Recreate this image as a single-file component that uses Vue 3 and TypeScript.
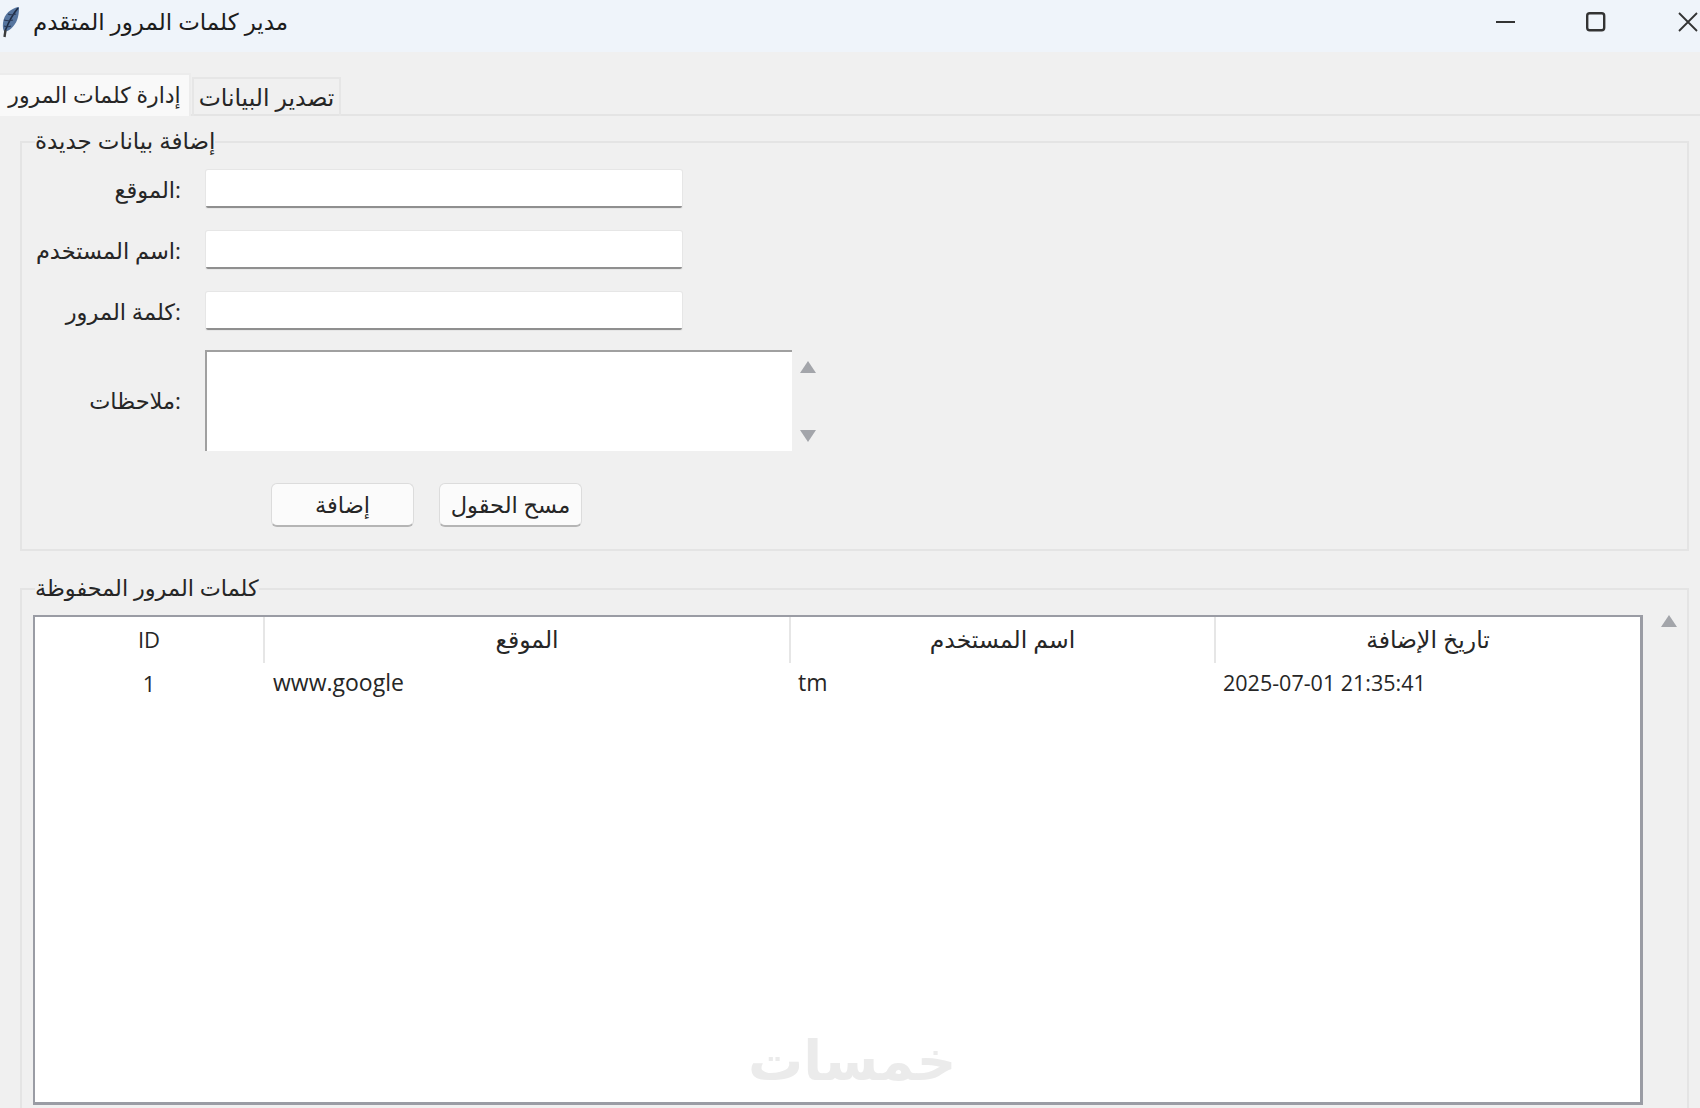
<script setup lang="ts">
interface Row { id: number; site: string; user: string; date: string }
const fields: string[] = ['الموقع:', 'اسم المستخدم:', 'كلمة المرور:']
const columns: string[] = ['ID', 'الموقع', 'اسم المستخدم', 'تاريخ الإضافة']
const rows: Row[] = [{ id: 1, site: 'www.google', user: 'tm', date: '2025-07-01 21:35:41' }]
</script>

<template>
  <div class="window">
    <header class="titlebar">
      <svg class="feather" width="20" height="32" viewBox="0 0 20 32">
        <path d="M18 1C10 2 3 8 2 17c-.4 4 0 7 1.500 9 6-1 12-8 13.500-15 1-4 1-8 1-10z" fill="#56759f" />
        <path d="M17 2C12 8 8 15 4.500 24" stroke="#1f2c44" stroke-width="1.600" fill="none" />
        <path d="M4.500 24L3.500 31" stroke="#3c3c3c" stroke-width="2.400" fill="none" />
        <path d="M3 14c3 1 6 1 9 0M3 20c3 1 5 1 7 0M7 8c2 1 5 1 8 0" stroke="#2b3a56" stroke-width="1.100" fill="none" />
      </svg>
      <span class="title">مدير كلمات المرور المتقدم</span>
      <div class="controls">
        <svg width="20" height="20" viewBox="0 0 20 20"><path d="M0 10h19" stroke="#333" stroke-width="2" /></svg>
        <svg width="20" height="20" viewBox="0 0 20 20"><rect x="1.200" y="1.200" width="17" height="17" rx="2.500" fill="none" stroke="#333" stroke-width="2.400" /></svg>
        <svg width="20" height="20" viewBox="0 0 20 20"><path d="M1 1l18 18M19 1L1 19" stroke="#333" stroke-width="1.800" /></svg>
      </div>
    </header>

    <nav class="tabs">
      <div class="tab active">إدارة كلمات المرور</div>
      <div class="tab">تصدير البيانات</div>
    </nav>

    <main class="content">
      <fieldset class="group first">
        <legend>إضافة بيانات جديدة</legend>
        <div class="form">
          <template v-for="f in fields" :key="f">
            <label class="label">{{ f }}</label>
            <div class="entry"></div>
          </template>
          <label class="label notes-label">ملاحظات:</label>
          <div class="notes-row">
            <div class="notes"></div>
            <div class="notes-scroll">
              <span class="arrow up"></span>
              <span class="arrow down"></span>
            </div>
          </div>
        </div>
        <div class="buttons">
          <button class="btn" type="button">إضافة</button>
          <button class="btn" type="button">مسح الحقول</button>
        </div>
      </fieldset>

      <fieldset class="group second">
        <legend>كلمات المرور المحفوظة</legend>
        <div class="tree-wrap">
          <div class="tree">
            <div class="tree-row head">
              <div v-for="c in columns" :key="c" class="cell">{{ c }}</div>
            </div>
            <div v-for="r in rows" :key="r.id" class="tree-row body">
              <div class="cell center">{{ r.id }}</div>
              <div class="cell">{{ r.site }}</div>
              <div class="cell">{{ r.user }}</div>
              <div class="cell date">{{ r.date }}</div>
            </div>
            <div class="watermark">خمسات</div>
          </div>
          <div class="tree-scroll"><span class="arrow up"></span></div>
        </div>
      </fieldset>
    </main>
  </div>
</template>

<style>
html, body { margin: 0; background: #f0f0f0; }
</style>

<style scoped>
.window {
  width: 1700px;
  height: 1108px;
  overflow: hidden;
  background: #f0f0f0;
  color: #262626;
  font-family: "Open Sans", "DejaVu Sans", sans-serif;
  font-size: 23px;
  line-height: 1.2;
  display: flex;
  flex-direction: column;
}
.titlebar {
  height: 52px;
  flex: none;
  background: #eff4fa;
  display: flex;
  align-items: center;
  padding-left: 1px;
  color: #1c1c1c;
}
.feather { margin-bottom: 8px; flex: none; }
.title { margin-left: 12px; margin-bottom: 9px; }
.controls {
  margin-left: auto;
  display: flex;
  align-items: center;
  gap: 70px;
  margin-bottom: 8px;
  margin-right: 2px;
}
.controls svg { display: block; }
.controls svg:last-child { margin-left: 2px; }
.tabs {
  margin-top: 20px;
  height: 44px;
  flex: none;
  display: flex;
  align-items: flex-end;
  border-bottom: 2px solid #e4e4e4;
  box-sizing: border-box;
}
.tab {
  height: 39px;
  box-sizing: border-box;
  width: 149px;
  margin-left: 1px;
  margin-bottom: -2px;
  border: 2px solid #e6e6e6;
  border-bottom: none;
  display: flex;
  align-items: center;
  justify-content: center;
  white-space: nowrap;
  font-size: 23.500px;
}
.tab.active {
  width: 191px;
  height: 43px;
  margin-left: 0;
  background: #f9f9f9;
  border-color: #ececec;
  border-left: none;
  padding-bottom: 3px;
  font-size: 22px;
}
.content {
  padding: 0 11px 0 20px;
  display: flex;
  flex-direction: column;
}
.group {
  margin: 0;
  padding: 0;
  border: 2px solid #e4e4e4;
  min-width: 0;
}
.group legend {
  margin-left: 13px;
  padding: 0;
  height: 30px;
  line-height: 27px;
  white-space: nowrap;
}
.second legend { font-size: 22.400px; }
.first { margin-top: 11px; height: 424px; box-sizing: border-box; }
.second { margin-top: 23px; height: 560px; box-sizing: border-box; }
.form {
  margin-top: 13px;
  display: grid;
  grid-template-columns: 159px auto;
  column-gap: 25px;
  row-gap: 23px;
  justify-content: start;
  align-items: center;
}
.label { text-align: right; white-space: nowrap; font-size: 22.500px; }
.entry {
  width: 476px;
  height: 38px;
  box-sizing: border-box;
  background: #fff;
  border-bottom: 2px solid #8f8f8f;
  box-shadow: 0 0 0 1px #e6e6e6;
  border-radius: 2px;
}
.notes-label, .notes-row { margin-top: -3px; }
.notes-row { display: flex; margin-left: -1px; }
.notes {
  width: 587px;
  height: 101px;
  box-sizing: border-box;
  background: #fff;
  border-top: 2px solid #a0a0a0;
  border-left: 2px solid #a0a0a0;
}
.notes-scroll {
  width: 32px;
  padding: 11px 0 9px;
  display: flex;
  flex-direction: column;
  justify-content: space-between;
  align-items: center;
}
.arrow {
  display: block;
  width: 0;
  height: 0;
  border-left: 8px solid transparent;
  border-right: 8px solid transparent;
}
.arrow.up { border-bottom: 12px solid #a3a5aa; }
.arrow.down { border-top: 12px solid #a3a5aa; }
.buttons {
  margin-top: 32px;
  margin-left: 249px;
  display: flex;
  gap: 25px;
}
.btn {
  width: 143px;
  height: 44px;
  padding: 0;
  background: #fbfbfb;
  border: 1px solid #dcdcdc;
  border-bottom: 2px solid #b5b5b5;
  border-radius: 6px;
  color: inherit;
  font: inherit;
  font-size: 22.500px;
}
.tree-wrap {
  margin-top: 11px;
  margin-left: 11px;
  display: flex;
  align-items: flex-start;
}
.tree {
  position: relative;
  width: 1610px;
  height: 490px;
  box-sizing: border-box;
  flex: none;
  background: #fff;
  border: 2px solid #9a9ca4;
  border-right-width: 3px;
  border-bottom-width: 3px;
}
.tree-row {
  display: grid;
  grid-template-columns: 228px 526px 425px 1fr;
  align-items: center;
}
.head { height: 46px; text-align: center; }
.head .cell { height: 100%; display: flex; align-items: center; justify-content: center; box-sizing: border-box; padding-bottom: 1px; font-size: 23.500px; }
.head .cell:first-child { font-size: 22px; }
.head .cell + .cell { border-left: 2px solid #e6e6e6; }
.body { height: 40px; }
.body .cell { padding-left: 9px; }
.body .cell:nth-child(2) { padding-left: 10px; }
.body .cell.center { padding-left: 0; text-align: center; font-size: 22px; }
.body .cell.date { font-size: 21.500px; }
.watermark {
  position: absolute;
  left: 713px;
  top: 412px;
  width: 205px;
  text-align: center;
  font-size: 55px;
  line-height: 60px;
  font-weight: 700;
  color: #ebebeb;
  white-space: nowrap;
}
.tree-scroll {
  margin-left: 13px;
  width: 26px;
  height: 490px;
  box-sizing: border-box;
  display: flex;
  justify-content: center;
}
</style>
